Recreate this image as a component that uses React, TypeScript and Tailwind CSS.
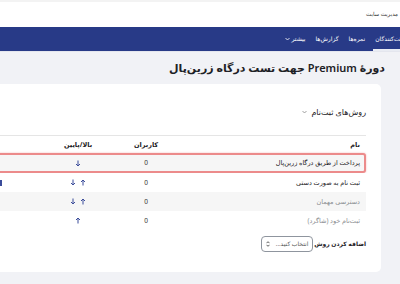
import React from 'react';

const font = { fontFamily: '"Noto Sans", "DejaVu Sans", sans-serif' };

function Up() {
  return (
    <svg width="6" height="7" viewBox="0 0 6 7" className="text-[#3b4c9a]">
      <path d="M3 6.5V1M1 3l2-2 2 2" stroke="currentColor" strokeWidth="1" fill="none" />
    </svg>
  );
}

function Down() {
  return (
    <svg width="6" height="7" viewBox="0 0 6 7" className="text-[#3b4c9a]">
      <path d="M3 0.5V6M1 4l2 2 2-2" stroke="currentColor" strokeWidth="1" fill="none" />
    </svg>
  );
}

type Row = { name: string; muted?: boolean; up?: boolean; down?: boolean; striped?: boolean; active?: boolean; icon?: boolean };

const rows: Row[] = [
  { name: 'پرداخت از طریق درگاه زرین‌پال', down: true, striped: true, active: true },
  { name: 'ثبت نام به صورت دستی', up: true, down: true, icon: true },
  { name: 'دسترسی مهمان', muted: true, up: true, down: true, striped: true },
  { name: 'ثبت‌نام خود (شاگرد)', muted: true, up: true },
];

export default function App() {
  return (
    <div dir="rtl" style={font} className="w-[400px] h-[284px] overflow-hidden bg-[#f1f2f6] text-[#1d2125]">
      {/* top bar */}
      <div className="h-[27px] bg-white border-t-2 border-[#f3f3f3] flex items-center pr-[2px]">
        <span className="text-[5.5px] text-[#333]">مدیریت سایت</span>
      </div>

      {/* nav */}
      <div className="h-[25px] bg-[#283a87] border-b border-[#e4e6ee] flex items-stretch text-white text-[6px]">
        <div className="flex items-center gap-[6px] mr-[-13px]">
          <div className="h-full flex items-center border-b-2 border-[#e9ecf3] px-[2px] pt-[2px]">شرکت‌کنندگان</div>
          <div className="px-[2px]">نمره‌ها</div>
          <div className="px-[2px]">گزارش‌ها</div>
          <div className="px-[2px] flex items-center gap-[2px]">
            بیشتر
            <svg width="5" height="4" viewBox="0 0 5 4"><path d="M0.5 1l2 2 2-2" stroke="white" strokeWidth="0.8" fill="none" /></svg>
          </div>
        </div>
      </div>

      {/* title */}
      <div className="pr-[15px] pt-[6px] h-[32px]">
        <h1 className="text-[11px] font-semibold leading-[20px] text-[#1d2125]">دورهٔ Premium جهت تست درگاه زرین‌پال</h1>
      </div>

      {/* card */}
      <div className="mr-[19px] w-[430px] bg-white rounded-[5px] pr-[15px] pt-[20px] pb-[20px]">
        <div className="flex items-center gap-[4px] h-[16px] text-[8px] text-[#1d2125]">
          روش‌های ثبت‌نام
          <svg width="5" height="4" viewBox="0 0 5 4"><path d="M0.5 1l2 2 2-2" stroke="#888" strokeWidth="0.8" fill="none" /></svg>
        </div>
        <div className="mt-[15px] border-t border-[#e5e5e5]" />

        <div className="text-[6.5px]">
          <div className="flex h-[17px] items-center font-bold text-[#1d2125]">
            <div className="w-[180px] pr-[6px]">نام</div>
            <div className="w-[80px] text-center">کاربران</div>
            <div className="w-[56px] text-center">بالا/پایین</div>
          </div>
          {rows.map((r, i) => (
            <div
              key={i}
              className={`flex items-center ${r.active ? 'h-[20px] border-2 border-[#ec8b8b] rounded-[3px] shadow-[0_0_2px_#f3b3b3] ml-[-10px]' : 'h-[19px]'} ${r.striped ? 'bg-[#f6f6f6]' : 'bg-white'}`}
            >
              <div className={`${r.active ? 'pr-[4px] w-[178px]' : 'pr-[6px] w-[180px]'} ${r.muted ? 'text-[#8a8d91]' : 'text-[#1d2125]'}`}>{r.name}</div>
              <div className="w-[80px] text-center text-[#333]">0</div>
              <div className="w-[56px] flex justify-center gap-[4px]">
                {r.up && <Up />}
                {r.down && <Down />}
              </div>
              {r.icon && <div className="mr-[48px] w-[2px] h-[6px] bg-[#3b4c9a]" />}
            </div>
          ))}
        </div>

        <div className="flex items-center gap-[1px] mt-[6px] h-[16px] text-[6px]">
          <span className="font-bold text-[#1d2125] whitespace-nowrap">اضافه کردن روش</span>
          <div className="w-[52px] h-[16px] border border-[#8f959e] rounded-[4px] flex items-center justify-between px-[4px] text-[#555] whitespace-nowrap">
            <span>انتخاب کنید...</span>
            <svg width="4" height="6" viewBox="0 0 4 6"><path d="M0.5 2.2L2 0.7 3.5 2.2M0.5 3.8L2 5.3 3.5 3.8" stroke="#333" strokeWidth="0.8" fill="none" /></svg>
          </div>
        </div>
      </div>
    </div>
  );
}
